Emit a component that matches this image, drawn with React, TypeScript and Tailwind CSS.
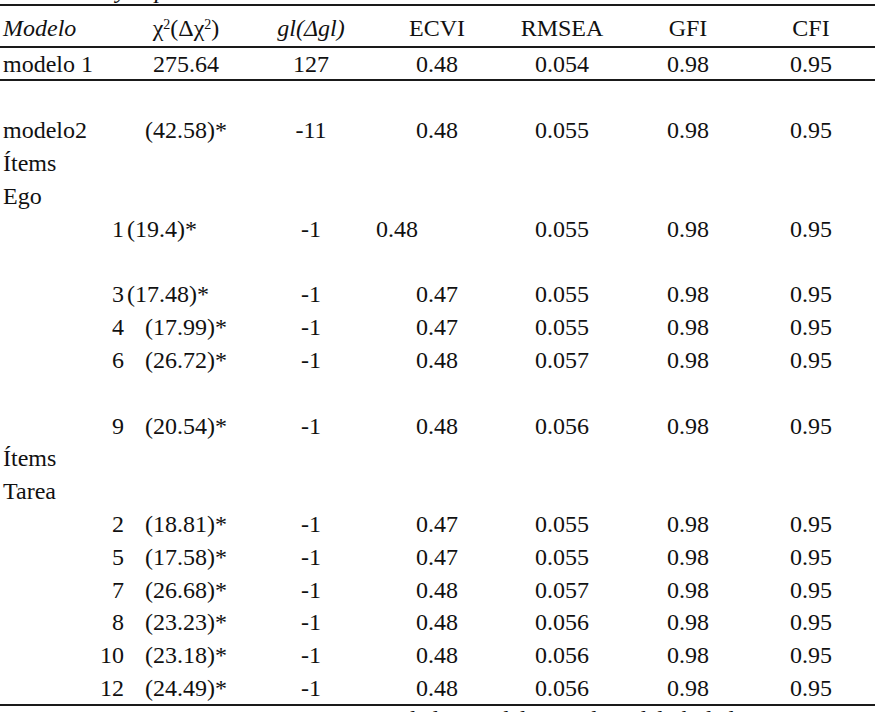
import React from 'react';

type Row = {
  label?: string;
  num?: string;
  chi?: string;
  chiMode?: 'tight' | 'wide' | 'center';
  gl?: string;
  ecvi?: string;
  ecviLeft?: boolean;
  rmsea?: string;
  gfi?: string;
  cfi?: string;
};

const item = (num: string, chi: string, gl: string, ecvi: string, rmsea: string, tight = false, ecviLeft = false): Row => ({
  num,
  chi,
  chiMode: tight ? 'tight' : 'wide',
  gl,
  ecvi,
  ecviLeft,
  rmsea,
  gfi: '0.98',
  cfi: '0.95',
});

const body: Row[] = [
  {},
  { label: 'modelo2', chi: '(42.58)*', chiMode: 'wide', gl: '-11', ecvi: '0.48', rmsea: '0.055', gfi: '0.98', cfi: '0.95' },
  { label: 'Ítems' },
  { label: 'Ego' },
  item('1', '(19.4)*', '-1', '0.48', '0.055', true, true),
  {},
  item('3', '(17.48)*', '-1', '0.47', '0.055', true),
  item('4', '(17.99)*', '-1', '0.47', '0.055'),
  item('6', '(26.72)*', '-1', '0.48', '0.057'),
  {},
  item('9', '(20.54)*', '-1', '0.48', '0.056'),
  { label: 'Ítems' },
  { label: 'Tarea' },
  item('2', '(18.81)*', '-1', '0.47', '0.055'),
  item('5', '(17.58)*', '-1', '0.47', '0.055'),
  item('7', '(26.68)*', '-1', '0.48', '0.057'),
  item('8', '(23.23)*', '-1', '0.48', '0.056'),
  item('10', '(23.18)*', '-1', '0.48', '0.056'),
  item('12', '(24.49)*', '-1', '0.48', '0.056'),
];

function BodyRow({ row, first }: { row: Row; first: boolean }) {
  const chiClass =
    row.chiMode === 'tight' ? 'pl-[3px]' : row.chiMode === 'center' ? 'text-center' : 'pl-[21px]';
  return (
    <div className={first ? 'flex h-[33px] items-center' : 'flex h-[32.8px] items-center'}>
      <div className="w-[100px] pl-[3px] whitespace-nowrap">{row.label}</div>
      <div className="w-[24px] text-right">{row.num}</div>
      <div className={`w-[124px] whitespace-nowrap ${chiClass}`}>{row.chi}</div>
      <div className="w-[126px] text-center">{row.gl}</div>
      <div className={row.ecviLeft ? 'w-[126px] pl-[2px]' : 'w-[126px] text-center'}>{row.ecvi}</div>
      <div className="w-[124px] text-center">{row.rmsea}</div>
      <div className="w-[128px] text-center">{row.gfi}</div>
      <div className="w-[118px] text-center">{row.cfi}</div>
    </div>
  );
}

export default function App() {
  return (
    <div
      className="w-[877px] h-[712px] overflow-hidden bg-white text-[#111] text-[24px] leading-none"
      style={{ fontFamily: '"Liberation Serif", "Times New Roman", serif' }}
    >
      {/* caption, cut off above */}
      <div className="h-[4px] overflow-hidden">
        <div className="-mt-[22px] flex italic whitespace-nowrap">
          <span className="ml-[116px]">y</span>
          <span className="ml-[28px]">p</span>
        </div>
      </div>

      <div className="w-[875px]">
        <div className="border-t-2 border-[#1a1a1a]" />
        <div className="flex h-[40px] items-center pt-[4px]">
          <div className="w-[100px] pl-[3px] italic">Modelo</div>
          <div className="w-[24px]" />
          <div className="w-[124px] text-center whitespace-nowrap">
            χ<sup className="text-[14px]">2</sup>(Δχ<sup className="text-[14px]">2</sup>)
          </div>
          <div className="w-[126px] text-center italic">gl(Δgl)</div>
          <div className="w-[126px] text-center">ECVI</div>
          <div className="w-[124px] text-center">RMSEA</div>
          <div className="w-[128px] text-center">GFI</div>
          <div className="w-[118px] text-center">CFI</div>
        </div>
        <div className="border-t-2 border-[#1a1a1a]" />
        <div className="flex h-[31px] items-center">
          <div className="w-[100px] pl-[3px] whitespace-nowrap">modelo 1</div>
          <div className="w-[24px]" />
          <div className="w-[124px] text-center">275.64</div>
          <div className="w-[126px] text-center">127</div>
          <div className="w-[126px] text-center">0.48</div>
          <div className="w-[124px] text-center">0.054</div>
          <div className="w-[128px] text-center">0.98</div>
          <div className="w-[118px] text-center">0.95</div>
        </div>
        <div className="border-t-2 border-[#1a1a1a]" />

        {body.map((row, i) => (
          <BodyRow key={i} row={row} first={i === 0} />
        ))}

        <div className="border-t-2 border-[#1a1a1a]" />
      </div>

      {/* note, cut off below */}
      <div className="h-[6px] overflow-hidden">
        <div className="whitespace-nowrap pl-[404px] pt-[1px]">de los modelo 1 y el modelo b de la</div>
      </div>
    </div>
  );
}
